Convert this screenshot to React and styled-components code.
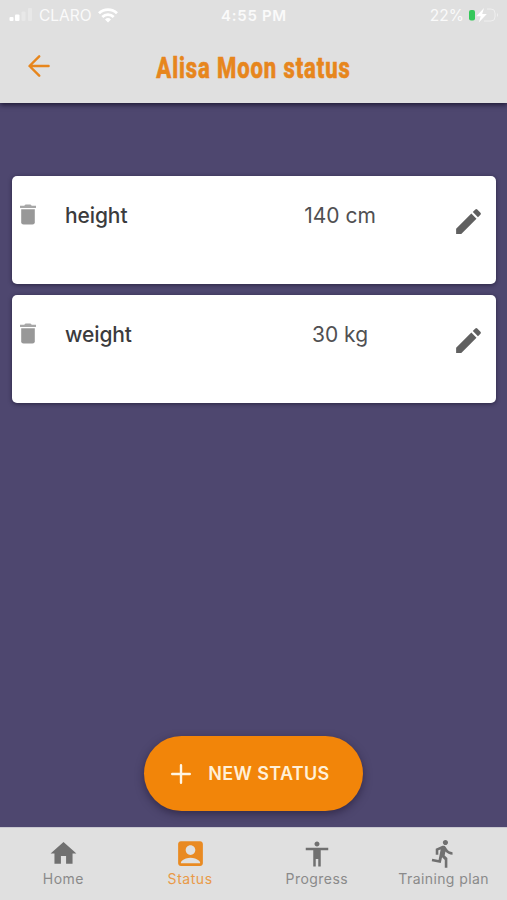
import React from 'react';
import styled, { createGlobalStyle } from 'styled-components';
import {
  MdAccessibility,
  MdAccountBox,
  MdDirectionsRun,
  MdEdit,
  MdHome,
} from 'react-icons/md';

const GlobalStyle = createGlobalStyle`
  * {
    box-sizing: border-box;
  }

  body {
    margin: 0;
    font-family: Inter, Roboto, sans-serif;
  }
`;

const stats = [
  { name: 'height', value: '140 cm' },
  { name: 'weight', value: '30 kg' },
];

const tabs = [
  { label: 'Home', icon: MdHome, size: 31, spacing: 0.45 },
  { label: 'Status', icon: MdAccountBox, size: 33, spacing: 0.55, active: true },
  { label: 'Progress', icon: MdAccessibility, size: 30, spacing: 0.45 },
  { label: 'Training plan', icon: MdDirectionsRun, size: 31, spacing: 0.4 },
];

const SignalIcon = () => (
  <svg width="24" height="14" viewBox="0 0 24 14" fill="#fff">
    <rect x="0.5" y="9" width="4" height="4" rx="1" />
    <rect x="6" y="6.5" width="4.5" height="6.5" rx="1" />
    <rect x="12.5" y="3.5" width="4" height="9.5" rx="1" opacity="0.25" />
    <rect x="19" y="0" width="4" height="13" rx="1" opacity="0.25" />
  </svg>
);

const WifiIcon = () => (
  <svg width="20" height="15" viewBox="0 0 20 15" fill="none" stroke="#fff" strokeWidth="2.8">
    <path d="M1 5.3a13 13 0 0 1 18 0" />
    <path d="M4.3 8.9a8.2 8.2 0 0 1 11.4 0" />
    <path d="M10 14.6l-3-3.2a4.3 4.3 0 0 1 6 0z" fill="#fff" stroke="none" />
  </svg>
);

const BatteryIcon = () => (
  <svg width="30" height="16" viewBox="0 0 30 16">
    <path d="M15 14h7a4 4 0 0 0 4-4V6a4 4 0 0 0-4-4h-4" fill="none" stroke="#efefef" />
    <path d="M28 6q2 2 0 4z" fill="#f0f0f0" />
    <rect x="0" y="3" width="6" height="10.5" rx="2" fill="#34c759" />
    <path d="M15 1L7.3 9.2h4.4L9.8 15.5l8-8.6h-4.6z" fill="#fff" />
  </svg>
);

const BackIcon = () => (
  <svg
    width="22"
    height="22"
    viewBox="0 0 22 22"
    fill="none"
    stroke="currentColor"
    strokeWidth="2.4"
    strokeLinecap="round"
    strokeLinejoin="round"
  >
    <path d="M11.2 1.3L1.5 11l9.7 9.7M1.8 11H20.6" />
  </svg>
);

const TrashIcon = () => (
  <svg width="16" height="21" viewBox="0 0 16 21" fill="#989898">
    <path d="M0.7 1.7h3.6Q5 0.5 6 0.5h4Q11 0.5 11.7 1.7h3.6a0.6 0.6 0 0 1 0 2.2H0.7a0.6 0.6 0 0 1 0-2.2z" opacity="0.85" />
    <path d="M1.2 5.3h13.6V18.3a2.3 2.3 0 0 1-2.3 2.3h-9a2.3 2.3 0 0 1-2.3-2.3z" />
  </svg>
);

const PlusIcon = () => (
  <svg width="20" height="20" viewBox="0 0 20 20" stroke="#fff5e3" strokeWidth="2.4" strokeLinecap="round">
    <path d="M10 1.2v17.6M1.2 10h17.6" />
  </svg>
);

export default function App() {
  return (
    <Screen>
      <GlobalStyle />
      <Header>
        <StatusBar>
          <Carrier>
            <SignalIcon />
            <span>CLARO</span>
            <WifiIcon />
          </Carrier>
          <Clock>4:55 PM</Clock>
          <Battery>
            <span>22%</span>
            <BatteryIcon />
          </Battery>
        </StatusBar>
        <TitleBar>
          <BackButton aria-label="Back">
            <BackIcon />
          </BackButton>
          <Title>Alisa Moon status</Title>
        </TitleBar>
      </Header>
      <Content>
        {stats.map((stat) => (
          <Card key={stat.name}>
            <DeleteButton aria-label="Delete">
              <TrashIcon />
            </DeleteButton>
            <Name>{stat.name}</Name>
            <Value>{stat.value}</Value>
            <EditButton aria-label="Edit">
              <MdEdit size={33} />
            </EditButton>
          </Card>
        ))}
        <NewButton>
          <PlusIcon />
          NEW STATUS
        </NewButton>
      </Content>
      <TabBar>
        {tabs.map(({ label, icon: Icon, size, spacing, active }) => (
          <Tab key={label} $active={active}>
            <TabIcon>
              <Icon size={size} />
            </TabIcon>
            <TabLabel $spacing={spacing} $active={active}>{label}</TabLabel>
          </Tab>
        ))}
      </TabBar>
    </Screen>
  );
}

const Screen = styled.div`
  display: flex;
  flex-direction: column;
  height: 900px;
  background: #4e476f;
  overflow: hidden;
`;

const Header = styled.header`
  position: relative;
  height: 103px;
  background: #e0e0e0;
  box-shadow: 0 2px 5px rgba(15, 10, 35, 0.75);
`;

const StatusBar = styled.div`
  display: grid;
  grid-template-columns: 1fr auto 1fr;
  align-items: center;
  height: 30px;
  padding: 0 8px 0 9px;
  color: #fafafa;
  font-size: 15.5px;
`;

const Carrier = styled.div`
  display: flex;
  align-items: center;
  gap: 6px;
`;

const Clock = styled.div`
  font-weight: 600;
  font-size: 15px;
  letter-spacing: 0.7px;
`;

const Battery = styled.div`
  display: flex;
  align-items: center;
  justify-content: flex-end;
  gap: 5px;
`;

const TitleBar = styled.div`
  display: grid;
  grid-template-columns: 78px 1fr 78px;
  align-items: center;
  height: 73px;
  color: #e7861d;
`;

const BackButton = styled.button`
  display: flex;
  justify-content: center;
  padding: 0 0 1px;
  border: 0;
  background: none;
  color: inherit;
`;

// squeezed horizontally to get a condensed headline face
const Title = styled.h1`
  margin: 0;
  padding-top: 2px;
  font-family: Roboto, sans-serif;
  font-size: 30px;
  font-weight: 800;
  line-height: 40px;
  letter-spacing: 1.2px;
  text-align: center;
  white-space: nowrap;
  transform: scaleX(0.735);
  -webkit-text-stroke: 0.6px currentColor;
`;

const Content = styled.main`
  display: flex;
  flex: 1;
  flex-direction: column;
  gap: 11px;
  padding: 73px 11px 16px 12px;
`;

const Card = styled.section`
  display: grid;
  grid-template-columns: 53px 1fr 112px 38px 62px;
  align-items: start;
  height: 108px;
  padding-top: 26px;
  border-radius: 5px;
  background: #fff;
  box-shadow: 0 1px 4px rgba(20, 15, 40, 0.6);
  font-size: 21px;
  line-height: 27px;
`;

const DeleteButton = styled.button`
  display: flex;
  padding: 2px 0 0 7.5px;
  border: 0;
  background: none;
`;

const Name = styled.div`
  color: #3b3b3d;
  font-weight: 500;
  letter-spacing: -0.1px;
`;

const Value = styled.div`
  color: #505052;
  text-align: center;
`;

const EditButton = styled.button`
  display: flex;
  grid-column: 5;
  padding: 3px 0 0 18px;
  border: 0;
  background: none;
  color: #606060;
`;

const NewButton = styled.button`
  display: flex;
  align-items: center;
  align-self: center;
  justify-content: center;
  gap: 17px;
  width: 219px;
  height: 75px;
  margin: auto 1px 0 0;
  padding: 0 6px 0 0;
  border: 0;
  border-radius: 38px;
  background: #f28509;
  box-shadow: 0 3px 8px rgba(30, 20, 45, 0.55);
  color: #fff0d8;
  font-family: inherit;
  font-size: 18px;
  font-weight: 600;
  letter-spacing: 0.35px;
`;

const TabBar = styled.nav`
  display: grid;
  grid-template-columns: repeat(4, 1fr);
  height: 73px;
  border-top: 1px solid #c9c8d0;
  background: #e0e0e0;
`;

const Tab = styled.div`
  display: flex;
  flex-direction: column;
  align-items: center;
  padding-top: 9px;
  color: ${(props) => (props.$active ? '#e98a22' : '#707070')};
`;

const TabIcon = styled.span`
  display: flex;
  align-items: center;
  justify-content: center;
  height: 33px;
`;

const TabLabel = styled.span`
  color: ${(props) => (props.$active ? '#e99a48' : '#8a8a8a')};
  font-size: 14px;
  line-height: 18px;
  letter-spacing: ${(props) => props.$spacing}px;
  white-space: nowrap;
`;
